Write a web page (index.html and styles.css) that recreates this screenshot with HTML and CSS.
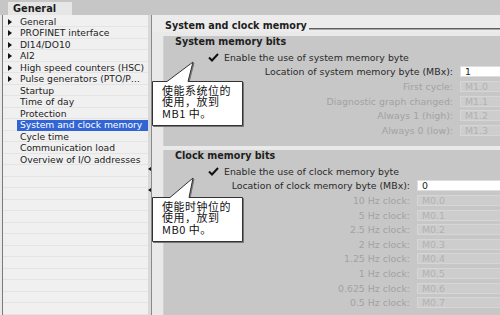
FILE: index.html
```
<!DOCTYPE html>
<html>
<head>
<meta charset="utf-8">
<link rel="stylesheet" href="styles.css">
</head>
<body>
<div class="app">
  <div class="topbar"><div class="tab">General</div></div>
  <div class="main">
    <div class="tree">
      <div class="row"><span class="tri"><i></i></span><span class="label">General</span></div>
      <div class="row"><span class="tri"><i></i></span><span class="label">PROFINET interface</span></div>
      <div class="row"><span class="tri"><i></i></span><span class="label">DI14/DO10</span></div>
      <div class="row"><span class="tri"><i></i></span><span class="label">AI2</span></div>
      <div class="row"><span class="tri"><i></i></span><span class="label">High speed counters (HSC)</span></div>
      <div class="row"><span class="tri"><i></i></span><span class="label">Pulse generators (PTO/PWM)</span></div>
      <div class="row"><span class="tri"></span><span class="label">Startup</span></div>
      <div class="row"><span class="tri"></span><span class="label">Time of day</span></div>
      <div class="row"><span class="tri"></span><span class="label">Protection</span></div>
      <div class="row"><span class="tri"></span><span class="label sel">System and clock memory</span></div>
      <div class="row"><span class="tri"></span><span class="label">Cycle time</span></div>
      <div class="row"><span class="tri"></span><span class="label">Communication load</span></div>
      <div class="row"><span class="tri"></span><span class="label">Overview of I/O addresses</span></div>
    </div>
    <div class="splitter"><span class="arr"></span><span class="arr"></span></div>
    <div class="content">
      <div class="title-row"><span class="title">System and clock memory</span><span class="rule"></span></div>
      <section class="sec sys">
        <h3 class="sec-title">System memory bits</h3>
        <div class="check-row">
          <svg class="check" width="11" height="9" viewBox="0 0 11 9"><path d="M1 4.5 L4 7.5 L10 1" fill="none" stroke="#111" stroke-width="2"/></svg>
          <span>Enable the use of system memory byte</span>
        </div>
        <div class="fields sys-fields">
          <span class="lbl">Location of system memory byte (MBx):</span><span class="inp on">1</span>
          <span class="lbl off">First cycle:</span><span class="inp">M1.0</span>
          <span class="lbl off">Diagnostic graph changed:</span><span class="inp">M1.1</span>
          <span class="lbl off">Always 1 (high):</span><span class="inp">M1.2</span>
          <span class="lbl off">Always 0 (low):</span><span class="inp">M1.3</span>
        </div>
      </section>
      <section class="sec clk">
        <h3 class="sec-title">Clock memory bits</h3>
        <div class="check-row">
          <svg class="check" width="11" height="9" viewBox="0 0 11 9"><path d="M1 4.5 L4 7.5 L10 1" fill="none" stroke="#111" stroke-width="2"/></svg>
          <span>Enable the use of clock memory byte</span>
        </div>
        <div class="fields clk-fields">
          <span class="lbl">Location of clock memory byte (MBx):</span><span class="inp on">0</span>
          <span class="lbl off">10 Hz clock:</span><span class="inp">M0.0</span>
          <span class="lbl off">5 Hz clock:</span><span class="inp">M0.1</span>
          <span class="lbl off">2.5 Hz clock:</span><span class="inp">M0.2</span>
          <span class="lbl off">2 Hz clock:</span><span class="inp">M0.3</span>
          <span class="lbl off">1.25 Hz clock:</span><span class="inp">M0.4</span>
          <span class="lbl off">1 Hz clock:</span><span class="inp">M0.5</span>
          <span class="lbl off">0.625 Hz clock:</span><span class="inp">M0.6</span>
          <span class="lbl off">0.5 Hz clock:</span><span class="inp">M0.7</span>
        </div>
      </section>
    </div>
  </div>
  <div class="callout c1">
    <svg class="bubble" width="91" height="45" viewBox="0 0 91 45"><path d="M0.5 0.5 H15 L41 -19 L36 0.5 H90.5 V44.5 H0.5 Z" fill="#fff" stroke="#333" stroke-width="1"/></svg>
    <div class="ctext">使能系统位的<br>使用，放到<br>MB1 中。</div>
  </div>
  <div class="callout c2">
    <svg class="bubble" width="91" height="45" viewBox="0 0 91 45"><path d="M0.5 0.5 H18 L41 -19 L37 0.5 H90.5 V44.5 H0.5 Z" fill="#fff" stroke="#333" stroke-width="1"/></svg>
    <div class="ctext">使能时钟位的<br>使用，放到<br>MB0 中。</div>
  </div>
</div>
</body>
</html>
```
FILE: styles.css
```
* { box-sizing: border-box; }
html, body { margin: 0; padding: 0; }
body {
  width: 500px;
  height: 315px;
  overflow: hidden;
  font-family: "DejaVu Sans", Verdana, sans-serif;
  font-size: 9.4px;
  color: #2a2a2a;
  background: #e9e9e9;
}
.app {
  position: relative;
  width: 500px;
  height: 315px;
  overflow: hidden;
}
.topbar {
  height: 15px;
  background: #c6c6c6;
  padding: 2px 0 0 8px;
}
.tab {
  width: 64px;
  height: 13px;
  background: #e6e6e6;
  font-weight: bold;
  font-size: 9.8px;
  line-height: 13px;
  padding-left: 5px;
  color: #1e1e1e;
}
.main {
  display: flex;
  height: 300px;
}
.tree {
  width: 146px;
  margin-left: 2px;
  border-left: 1px solid #7a7a7a;
  padding-top: 1px;
  background: repeating-linear-gradient(to bottom, #f0f0f0 0, #f0f0f0 10.5px, #e4e4e4 10.5px, #e4e4e4 11.5px);
  background-position: 0 1px;
}
.row {
  display: flex;
  align-items: center;
  height: 11.5px;
  padding: 0 0 0 5px;
  font-size: 9.2px;
  line-height: 10.5px;
  white-space: nowrap;
}
.tri {
  width: 9px;
  flex-shrink: 0;
  display: flex;
  align-items: center;
}
.tri i {
  display: block;
  width: 0;
  height: 0;
  border-left: 4px solid #111;
  border-top: 3px solid transparent;
  border-bottom: 3px solid transparent;
}
.label {
  flex: 1;
  min-width: 0;
  padding: 0 0 0 3px;
  height: 10.5px;
  overflow: hidden;
  text-overflow: ellipsis;
  color: #222;
}
.label.sel {
  background: #3265d3;
  color: #fff;
}
.splitter {
  width: 6px;
  background: #d9d9d9;
  border-right: 1px solid #8a8a8a;
  display: flex;
  flex-direction: column;
  align-items: center;
  padding-top: 152px;
  gap: 17px;
}
.arr {
  display: block;
  width: 0;
  height: 0;
  border-right: 3px solid #111;
  border-top: 2px solid transparent;
  border-bottom: 2px solid transparent;
}
.content {
  flex: 1;
  padding-left: 11px;
  background: #e9e9e9;
}
.title-row {
  display: flex;
  height: 17px;
  align-items: flex-end;
  background: #ececec;
  margin-left: -11px;
  padding-left: 13px;
}
.title {
  font-weight: bold;
  font-size: 9.6px;
  line-height: 12px;
  margin-bottom: 0;
  color: #1e1e1e;
}
.rule {
  flex: 1;
  height: 2px;
  margin: 0 0 2px 2px;
  border-top: 1px solid #5e5e5e;
  border-bottom: 1px solid #a8a8a8;
}
.sec {
  width: 345px;
  background: #c7c7c7;
  border-left: 1px solid #d2d2d2;
}
.sys {
  height: 110px;
  margin-bottom: 4px;
}
.clk {
  height: 166px;
}
.sec-title {
  margin: 4px 0 0 11px;
  font-size: 9.6px;
  font-weight: bold;
  line-height: 12px;
  color: #1e1e1e;
}
.clk .sec-title {
  margin-top: 3px;
}
.check-row {
  display: flex;
  align-items: center;
  height: 12px;
  margin: 3px 0 0 44px;
  gap: 5px;
}
.check {
  display: block;
}
.fields {
  display: grid;
  column-gap: 7px;
  grid-auto-rows: 14.6px;
  align-items: center;
}
.sys-fields {
  grid-template-columns: 289px 43px;
  margin-top: 1.7px;
}
.clk-fields {
  grid-template-columns: 246px 86px;
  margin-top: 1.7px;
}
.lbl {
  text-align: right;
  white-space: nowrap;
  color: #2a2a2a;
}
.lbl.off {
  color: #a2a2a2;
}
.inp {
  display: block;
  height: 11px;
  line-height: 9px;
  padding-left: 4px;
  background: #cdcdcd;
  border: 1px solid #d6d6d6;
  color: #b2b2b2;
}
.inp.on {
  background: #fff;
  border-color: #dedede;
  color: #222;
}
.callout {
  position: absolute;
  left: 152px;
  width: 91px;
  height: 45px;
}
.c1 { top: 81px; }
.c2 { top: 197px; }
.bubble {
  position: absolute;
  left: 0;
  top: 0;
  overflow: visible;
  filter: drop-shadow(1px 1px 0 #777);
}
.ctext {
  position: relative;
  padding: 3.5px 0 0 10px;
  font-family: "Noto Sans CJK SC", sans-serif;
  font-size: 11px;
  letter-spacing: 0.5px;
  line-height: 11.5px;
  color: #111;
  white-space: nowrap;
}
```
